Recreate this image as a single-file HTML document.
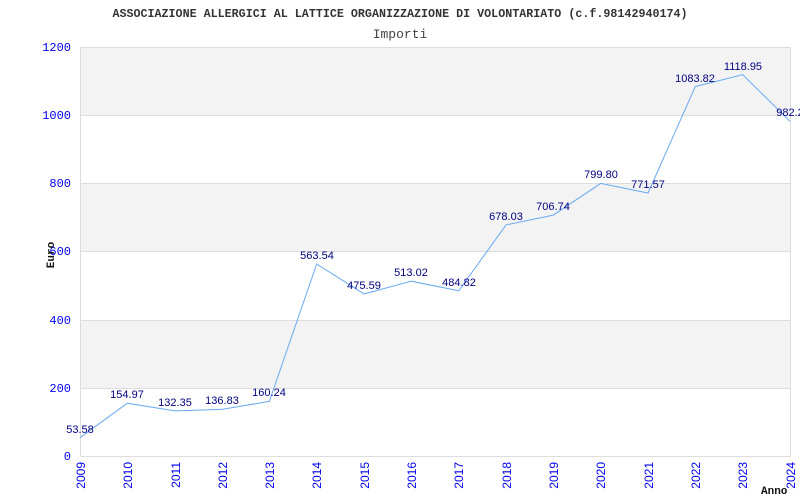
<!DOCTYPE html>
<html><head><meta charset="utf-8"><style>body{margin:0;background:#fff}svg{display:block}</style></head><body>
<svg width="800" height="500" xmlns="http://www.w3.org/2000/svg">
<rect width="800" height="500" fill="#fff"/>
<text x="400" y="17" text-anchor="middle" font-family="Liberation Mono, monospace" font-size="11.7" font-weight="bold" fill="#333">ASSOCIAZIONE ALLERGICI AL LATTICE ORGANIZZAZIONE DI VOLONTARIATO (c.f.98142940174)</text>
<text x="400" y="38" text-anchor="middle" font-family="Liberation Mono, monospace" font-size="13" fill="#444">Importi</text>
<g fill="#f3f3f3">
<rect x="80.5" y="47.5" width="710" height="68.2"/>
<rect x="80.5" y="183.8" width="710" height="68.2"/>
<rect x="80.5" y="320.2" width="710" height="68.2"/>
</g>
<g stroke="#ddd" stroke-width="1">
<line x1="80.5" y1="47.5" x2="790.5" y2="47.5"/>
<line x1="80.5" y1="115.5" x2="790.5" y2="115.5"/>
<line x1="80.5" y1="183.5" x2="790.5" y2="183.5"/>
<line x1="80.5" y1="251.5" x2="790.5" y2="251.5"/>
<line x1="80.5" y1="320.5" x2="790.5" y2="320.5"/>
<line x1="80.5" y1="388.5" x2="790.5" y2="388.5"/>
<line x1="80.5" y1="456.5" x2="790.5" y2="456.5"/>
<line x1="80.5" y1="47.5" x2="80.5" y2="456.5"/>
<line x1="790.5" y1="47.5" x2="790.5" y2="456.5"/>
</g>
<g font-family="Liberation Mono, monospace" font-size="12" fill="#0000ee" text-anchor="end">
<text x="71" y="51">1200</text><text x="71" y="119">1000</text><text x="71" y="187">800</text><text x="71" y="255">600</text><text x="71" y="324">400</text><text x="71" y="392">200</text><text x="71" y="460">0</text>
</g>
<g font-family="Liberation Sans, sans-serif" font-size="12" fill="#0000ee" text-anchor="end">
<text transform="translate(85,462) rotate(-90)">2009</text>
<text transform="translate(132,462) rotate(-90)">2010</text>
<text transform="translate(180,462) rotate(-90)">2011</text>
<text transform="translate(227,462) rotate(-90)">2012</text>
<text transform="translate(274,462) rotate(-90)">2013</text>
<text transform="translate(321,462) rotate(-90)">2014</text>
<text transform="translate(369,462) rotate(-90)">2015</text>
<text transform="translate(416,462) rotate(-90)">2016</text>
<text transform="translate(463,462) rotate(-90)">2017</text>
<text transform="translate(511,462) rotate(-90)">2018</text>
<text transform="translate(558,462) rotate(-90)">2019</text>
<text transform="translate(605,462) rotate(-90)">2020</text>
<text transform="translate(653,462) rotate(-90)">2021</text>
<text transform="translate(700,462) rotate(-90)">2022</text>
<text transform="translate(747,462) rotate(-90)">2023</text>
<text transform="translate(795,462) rotate(-90)">2024</text>
</g>
<text transform="translate(54,255) rotate(-90)" text-anchor="middle" font-family="Liberation Mono, monospace" font-size="11" font-weight="bold" fill="#111">Euro</text>
<text x="761" y="494" font-family="Liberation Mono, monospace" font-size="11" font-weight="bold" fill="#111">Anno</text>
<polyline fill="none" stroke="#6aaaf0" stroke-width="1" points="80,437.7 127.3,403.2 174.7,410.9 222,409.4 269.3,401.4 316.7,264 364,293.9 411.3,281.2 458.7,290.8 506,224.9 553.3,215.1 600.7,183.4 648,193 695.3,86.6 742.7,74.7 790,121.3"/>
<g font-family="Liberation Sans, sans-serif" font-size="11" fill="#000080" text-anchor="middle">
<text x="80" y="433">53.58</text>
<text x="127" y="398">154.97</text>
<text x="175" y="406">132.35</text>
<text x="222" y="404">136.83</text>
<text x="269" y="396">160.24</text>
<text x="317" y="259">563.54</text>
<text x="364" y="289">475.59</text>
<text x="411" y="276">513.02</text>
<text x="459" y="286">484.82</text>
<text x="506" y="220">678.03</text>
<text x="553" y="210">706.74</text>
<text x="601" y="178">799.80</text>
<text x="648" y="188">771.57</text>
<text x="695" y="82">1083.82</text>
<text x="743" y="70">1118.95</text>
<text x="790" y="116">982.2</text>
</g>
</svg>
</body></html>
